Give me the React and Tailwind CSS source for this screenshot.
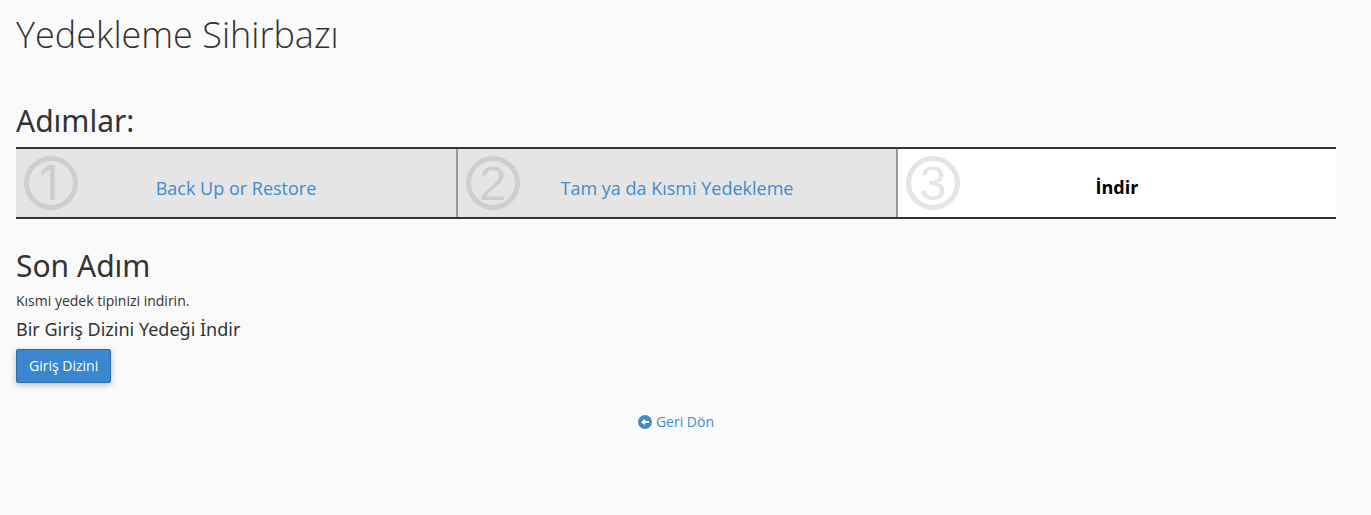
const steps = [
  { n: 1, label: "Back Up or Restore", active: false },
  { n: 2, label: "Tam ya da Kısmi Yedekleme", active: false },
  { n: 3, label: "İndir", active: true },
];

function StepNumber({ n, active }) {
  return (
    <svg viewBox="0 0 54 54" className={active ? "size-[54px] shrink-0 overflow-visible text-[#e5e5e5]" : "size-[54px] shrink-0 overflow-visible text-[#cecece]"} aria-hidden="true">
      <circle cx="27" cy="27" r="24.5" fill="none" stroke="currentColor" strokeWidth="5" />
      <text x={n === 1 ? 25 : 27} y="44" textAnchor="middle" fontSize={n === 1 ? 48 : 49} fontFamily={n === 1 ? "Inter, sans-serif" : "Liberation Sans, sans-serif"} fill="currentColor">{n}</text>
    </svg>
  );
}

function Step({ n, label, active }) {
  return (
    <li className={active ? "relative h-[68px] flex-1 border-[#999] bg-white not-first:border-l-2" : "relative h-[68px] flex-1 border-[#999] bg-[#e5e5e5] not-first:border-l-2"}>
      <div className="absolute top-[7px] left-2">
        <StepNumber n={n} active={active} />
      </div>
      <div className={active ? "flex h-full items-center justify-center pt-2 text-lg leading-5" : "flex h-full items-center justify-center pt-[10px] text-lg leading-5"}>
        {active ? <strong className="font-bold text-black">{label}</strong> : <a href="#" className="text-[#428bca]">{label}</a>}
      </div>
    </li>
  );
}

export default function App() {
  return (
    <div className="min-h-screen bg-[#fafafa] pt-[13px] pr-[35px] pl-4 font-['Open_Sans','Noto_Sans',sans-serif] text-sm leading-5 text-[#333]">
      <h1 className="text-4xl leading-11 font-light">Yedekleme Sihirbazı</h1>
      <h2 className="mt-[47px] font-['Noto_Sans',sans-serif] text-3xl leading-[34px]">Adımlar:</h2>
      <ol className="mt-[9px] grid grid-cols-3 border-y-2 border-[#333]">
        {steps.map((s) => <Step key={s.n} {...s} />)}
      </ol>
      <h2 className="mt-[30px] font-['Noto_Sans',sans-serif] text-3xl leading-[34px]">Son Adım</h2>
      <p className="mt-2">Kısmi yedek tipinizi indirin.</p>
      <h3 className="mt-2 font-['Noto_Sans',sans-serif] text-lg leading-5">Bir Giriş Dizini Yedeği İndir</h3>
      <button type="button" className="mt-[10px] h-[34px] rounded-xs border border-[#2a6ca5] bg-[#3a87cf] px-3 text-white shadow-[0_2px_6px_rgba(0,0,0,0.25)]">Giriş Dizini</button>
      <div className="mt-[29px] flex justify-center">
        <a href="#" className="flex items-center gap-1 text-[#428bca]">
          <svg viewBox="0 0 14 14" className="-mt-px size-[14px]" aria-hidden="true">
            <circle cx="7" cy="7" r="7" fill="currentColor" />
            <path d="M3 7 7 3.7V6h4v2H7v2.3z" fill="#fff" />
          </svg>
          Geri Dön
        </a>
      </div>
    </div>
  );
}
